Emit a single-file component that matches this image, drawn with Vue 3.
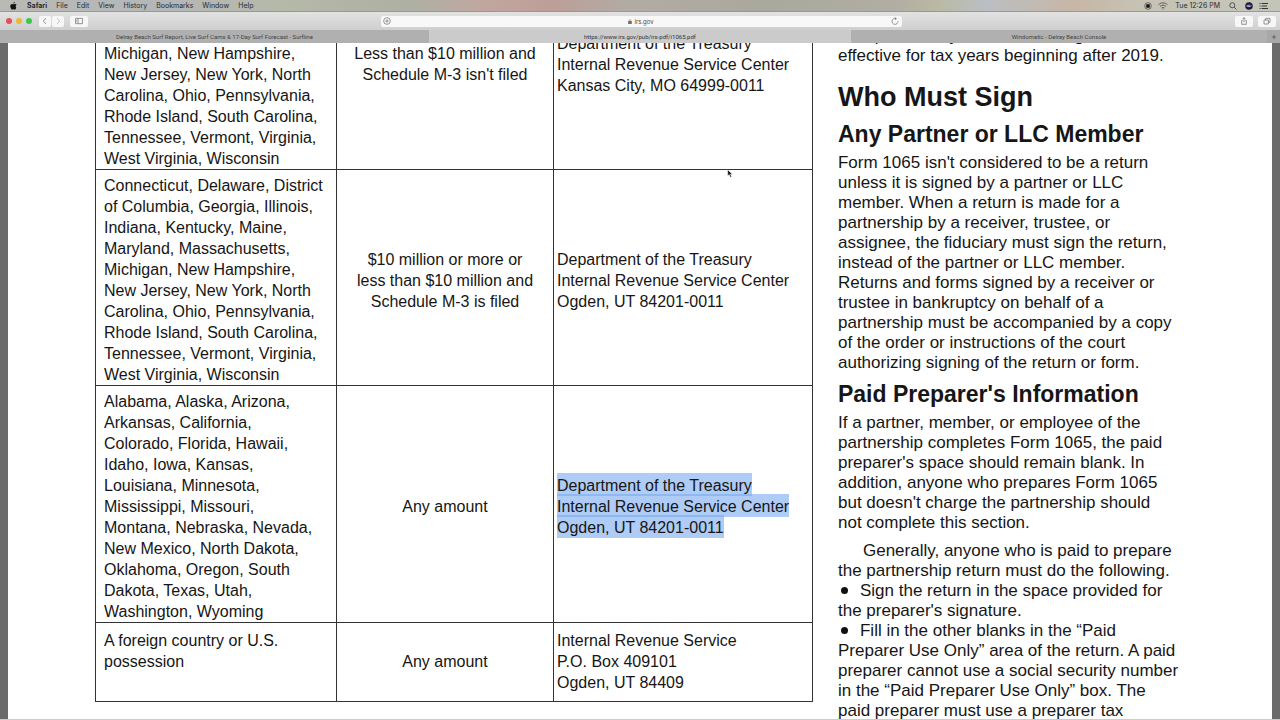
<script setup>
const menus = ['File', 'Edit', 'View', 'History', 'Bookmarks', 'Window', 'Help']

const tabs = [
  { title: 'Delray Beach Surf Report, Live Surf Cams & 17-Day Surf Forecast - Surfline', active: false },
  { title: 'https://www.irs.gov/pub/irs-pdf/i1065.pdf', active: true },
  { title: 'Windomatic - Delray Beach Console', active: false },
]

const rows = [
  {
    kind: 'partial',
    states: `Michigan, New Hampshire,
New Jersey, New York, North
Carolina, Ohio, Pennsylvania,
Rhode Island, South Carolina,
Tennessee, Vermont, Virginia,
West Virginia, Wisconsin`,
    assets: `Less than $10 million and
Schedule M-3 isn't filed`,
    address: ['Department of the Treasury', 'Internal Revenue Service Center', 'Kansas City, MO 64999-0011'],
  },
  {
    kind: 'full',
    states: `Connecticut, Delaware, District
of Columbia, Georgia, Illinois,
Indiana, Kentucky, Maine,
Maryland, Massachusetts,
Michigan, New Hampshire,
New Jersey, New York, North
Carolina, Ohio, Pennsylvania,
Rhode Island, South Carolina,
Tennessee, Vermont, Virginia,
West Virginia, Wisconsin`,
    assets: `$10 million or more or
less than $10 million and
Schedule M-3 is filed`,
    address: ['Department of the Treasury', 'Internal Revenue Service Center', 'Ogden, UT 84201-0011'],
  },
  {
    kind: 'full',
    selected: true,
    states: `Alabama, Alaska, Arizona,
Arkansas, California,
Colorado, Florida, Hawaii,
Idaho, Iowa, Kansas,
Louisiana, Minnesota,
Mississippi, Missouri,
Montana, Nebraska, Nevada,
New Mexico, North Dakota,
Oklahoma, Oregon, South
Dakota, Texas, Utah,
Washington, Wyoming`,
    assets: 'Any amount',
    address: ['Department of the Treasury', 'Internal Revenue Service Center', 'Ogden, UT 84201-0011'],
  },
  {
    kind: 'last',
    states: `A foreign country or U.S.
possession`,
    assets: 'Any amount',
    address: ['Internal Revenue Service', 'P.O. Box 409101', 'Ogden, UT 84409'],
  },
]

const intro = `This preliminary threshold change is
effective for tax years beginning after 2019.`

const signing = `Form 1065 isn't considered to be a return
unless it is signed by a partner or LLC
member. When a return is made for a
partnership by a receiver, trustee, or
assignee, the fiduciary must sign the return,
instead of the partner or LLC member.
Returns and forms signed by a receiver or
trustee in bankruptcy on behalf of a
partnership must be accompanied by a copy
of the order or instructions of the court
authorizing signing of the return or form.`

const preparer = `If a partner, member, or employee of the
partnership completes Form 1065, the paid
preparer's space should remain blank. In
addition, anyone who prepares Form 1065
but doesn't charge the partnership should
not complete this section.`

const generally = `Generally, anyone who is paid to prepare
the partnership return must do the following.`

const duties = [
  `Sign the return in the space provided for
the preparer's signature.`,
  `Fill in the other blanks in the “Paid
Preparer Use Only” area of the return. A paid
preparer cannot use a social security number
in the “Paid Preparer Use Only” box. The
paid preparer must use a preparer tax`,
]
</script>

<template>
  <div class="desktop">
    <header class="menubar">
      <svg class="apple" viewBox="0 0 14 16" aria-hidden="true">
        <path d="M9.9 0c.1 1.700-1.300 3.300-3 3.300C6.700 1.700 8.300.2 9.900 0zM12.700 11.600c-.7 1.600-1.700 3.600-3 3.600-1 0-1.300-.6-2.500-.6s-1.600.6-2.500.6C2.900 15.200.6 11.400.6 8.300c0-2.800 1.800-4.400 3.600-4.400 1.200 0 2.100.7 2.900.7.700 0 1.900-.8 3.300-.8 1.200 0 2.200.6 2.800 1.500-2.500 1.500-2.100 5.300-.5 6.300z" />
      </svg>
      <nav class="menus" aria-label="Menu bar">
        <button type="button" class="menu app">Safari</button>
        <button v-for="m in menus" :key="m" type="button" class="menu">{{ m }}</button>
      </nav>
      <div class="status">
        <svg class="s9" viewBox="0 0 18 18" aria-hidden="true"><circle cx="9" cy="9" r="7.500" fill="none" stroke="#333" stroke-width="1.400" /><rect x="5" y="5" width="8" height="8" rx="1" fill="#111" /></svg>
        <svg class="s10" viewBox="0 0 20 16" fill="none" stroke="#444" stroke-width="1.600" aria-hidden="true"><path d="M1 5.500C6 .5 14 .5 19 5.500M4 8.800c3.500-3.300 8.500-3.300 12 0M7 12c2-1.600 4-1.600 6 0" /><circle cx="10" cy="14" r="1" fill="#333" stroke="none" /></svg>
        <time class="clock">Tue 12:26 PM</time>
        <svg class="s9" viewBox="0 0 16 16" fill="none" stroke="#333" stroke-width="1.500" aria-hidden="true"><circle cx="6.500" cy="6.500" r="5" /><path d="M10.200 10.200 15 15" /></svg>
        <svg class="s9 siri" viewBox="0 0 18 18" aria-hidden="true"><circle cx="9" cy="9" r="8.500" fill="#1b1c33" /><path d="M2 9c4-5 9-4 14-1-4 5-9 5-14 1z" fill="#5267b8" /><path d="M4 9c3-2 6-1 9 1-3 2-7 2-9-1z" fill="#d4a9d6" /></svg>
        <svg class="s10" viewBox="0 0 20 16" stroke="#222" stroke-width="1.800" aria-hidden="true"><path d="M1 3h2M5 3h13M1 8h2M5 8h11M1 13h2M5 13h13" /></svg>
      </div>
    </header>

    <div class="toolbar">
      <div class="left">
        <div class="lights">
          <button type="button" class="light red" aria-label="Close"></button>
          <button type="button" class="light yellow" aria-label="Minimize"></button>
          <button type="button" class="light green" aria-label="Full screen"></button>
        </div>
        <div class="pair">
          <button type="button" class="tool" aria-label="Back"><svg viewBox="0 0 12 12"><path d="M7.500 1.500 3.500 6l4 4.500" /></svg></button>
          <button type="button" class="tool dim" aria-label="Forward"><svg viewBox="0 0 12 12"><path d="M4.500 1.500 8.500 6l-4 4.500" /></svg></button>
        </div>
        <button type="button" class="tool wide" aria-label="Sidebar"><svg viewBox="0 0 12 12"><path d="M.8 2h10.400v8H.8zM4.500 2v8M2 4.500h1.200M2 6.500h1.200" /></svg></button>
      </div>
      <div class="address">
        <button type="button" aria-label="Add to reading list"><svg viewBox="0 0 12 12"><circle cx="6" cy="6" r="5" /><path d="M6 3.500v5M3.500 6h5" /></svg></button>
        <span class="site"><svg class="lock" viewBox="0 0 8 10" aria-hidden="true"><rect x="1" y="4.500" width="6" height="5" /><path d="M2.300 4.500V3a1.700 1.700 0 0 1 3.400 0v1.500" /></svg>irs.gov</span>
        <button type="button" aria-label="Reload"><svg viewBox="0 0 12 12"><path d="M10.500 6.500a4.500 4.500 0 1 1-3-4.200M5.500.5 8 2.300 6 4.500" /></svg></button>
      </div>
      <div class="right">
        <button type="button" class="tool wide" aria-label="Share"><svg viewBox="0 0 12 12"><path d="M4 5H2.500v6h7V5H8M6 8V1M4 3l2-2 2 2" /></svg></button>
        <button type="button" class="tool wide" aria-label="Show all tabs"><svg viewBox="0 0 12 12"><path d="M1.500 4.500h6.500v6H1.500zM4 4.500v-2.500h6.500v6H8" /></svg></button>
      </div>
    </div>

    <div class="tabbar">
      <button v-for="t in tabs" :key="t.title" type="button" class="tab" :class="{ active: t.active }">{{ t.title }}</button>
      <button type="button" class="newtab" aria-label="New tab"><svg viewBox="0 0 8 8"><path d="M4 1v6M1 4h6" /></svg></button>
    </div>

    <main class="viewer">
      <div class="sheet">
        <table class="where">
          <colgroup><col class="c1" /><col class="c2" /><col /></colgroup>
          <tbody>
            <tr v-for="(r, i) in rows" :key="i" :class="r.kind">
              <td class="states">{{ r.states }}</td>
              <td class="assets">{{ r.assets }}</td>
              <td class="office"><div v-for="line in r.address" :key="line"><span :class="{ sel: r.selected }">{{ line }}</span></div></td>
            </tr>
          </tbody>
        </table>
        <article class="text">
          <p>{{ intro }}</p>
          <h1>Who Must Sign</h1>
          <h2>Any Partner or LLC Member</h2>
          <p>{{ signing }}</p>
          <h2 class="second">Paid Preparer's Information</h2>
          <p>{{ preparer }}</p>
          <p class="indent">{{ generally }}</p>
          <ul>
            <li v-for="d in duties" :key="d">{{ d }}</li>
          </ul>
        </article>
      </div>
    </main>

    <svg class="pointer" viewBox="0 0 8 12" aria-hidden="true"><path d="M1 1v8l2-1.800L4.500 11l1.500-.7-1.500-3.300H7z" /></svg>
  </div>
</template>

<style>
html,
body {
  margin: 0;
  overflow: hidden;
}
</style>

<style scoped>
.desktop {
  position: relative;
  display: flex;
  flex-direction: column;
  height: 100vh;
  overflow: hidden;
  background: #6b6b6b;
  color: #161616;
  font-family: "Liberation Sans", Arial, sans-serif;
}
button {
  margin: 0;
  padding: 0;
  border: 0;
  background: none;
  color: inherit;
  font: inherit;
}
svg {
  display: block;
  flex: none;
}

.menubar {
  display: flex;
  align-items: center;
  flex: none;
  height: 12px;
  padding: 0 11px 0 10px;
  background: linear-gradient(90deg, #b9bab5 0%, #b4b7b9 12%, #b5b9a8 22%, #aeb0a3 32%, #c0a69f 38%, #bd9f98 43%, #b1aba4 49%, #aaa99e 60%, #b0aea3 70%, #b9b9a2 73%, #bbbfc3 77%, #c7b6a5 84%, #c6c3b4 89%, #c4c5ba 100%);
  border-bottom: 1px solid #999990;
  box-sizing: border-box;
  color: #2a2a2a;
  font-family: Inter, "Liberation Sans", sans-serif;
  font-size: 7px;
  line-height: 11px;
}
.apple {
  width: 7px;
  height: 8px;
  fill: #111;
}
.menus {
  display: flex;
  gap: 9px;
  margin-left: 10px;
}
.app {
  font-weight: 700;
}
.status {
  display: flex;
  align-items: center;
  margin-left: auto;
}
.s9 {
  width: 8px;
  height: 8px;
}
.s10 {
  width: 10px;
  height: 8px;
  margin-left: 6px;
}
.clock {
  margin: 0 9px 0 7px;
}
.siri {
  margin-left: 8px;
}

.toolbar {
  display: grid;
  grid-template-columns: 1fr 521px 1fr;
  align-items: center;
  flex: none;
  height: 18px;
  padding: 0 4px 0 6px;
  background: linear-gradient(#e2e2e2, #cfcfcf);
}
.left,
.right,
.lights,
.pair {
  display: flex;
  align-items: center;
}
.lights {
  gap: 4px;
}
.light {
  width: 6px;
  height: 6px;
  border-radius: 50%;
}
.red { background: #e4505a; }
.yellow { background: #edb83c; }
.green { background: #3cc84a; }
.pair {
  gap: 1px;
  margin: 0 6px 0 7px;
}
.tool {
  display: flex;
  align-items: center;
  justify-content: center;
  width: 12px;
  height: 11px;
  border-radius: 2px;
  background: #f7f7f7;
}
.wide {
  width: 18px;
}
.toolbar svg {
  width: 8px;
  height: 8px;
  fill: none;
  stroke: #666;
  stroke-width: 1;
}
.toolbar .dim svg {
  stroke: #aaa;
}
.right {
  justify-content: flex-end;
  gap: 5px;
}
.address {
  display: flex;
  align-items: center;
  justify-content: space-between;
  height: 11px;
  padding: 0 2px;
  border-radius: 2px;
  background: #f8f8f8;
}
.site {
  display: flex;
  align-items: center;
  gap: 2px;
  font-family: Inter, "Liberation Sans", sans-serif;
  font-size: 6px;
  line-height: 11px;
  color: #444;
}
.toolbar .lock {
  width: 4px;
  height: 5px;
}
.lock rect {
  fill: #666;
}

.tabbar {
  display: grid;
  grid-template-columns: 429fr 422fr 416fr 13px;
  flex: none;
  height: 13px;
  background: #b0b0b0;
  font-family: Roboto, "Liberation Sans", sans-serif;
  font-size: 6px;
  line-height: 13px;
  color: #444;
}
.tab {
  min-width: 0;
  white-space: nowrap;
}
.tab.active {
  background: #cbcbcb;
  color: #333;
}
.newtab {
  display: flex;
  align-items: center;
  justify-content: center;
  background: #a8a8a8;
}
.newtab svg {
  width: 6px;
  height: 6px;
  stroke: #555;
}

.viewer {
  display: flex;
  flex: 1;
  min-height: 0;
  overflow: hidden;
  padding: 0 8px;
  border-bottom: 1px solid #ccc;
}
.sheet {
  display: flex;
  flex: 1;
  align-items: flex-start;
  gap: 25px;
  margin-top: -18px;
  padding-left: 87px;
  background: #fff;
}
.where {
  flex: none;
  width: 61%;
  border-collapse: collapse;
  table-layout: fixed;
  font-size: 16px;
  line-height: 21px;
}
.c1 { width: 241px; }
.c2 { width: 217px; }
td {
  border: 1px solid #333;
  padding: 5px 0 0 8px;
  vertical-align: top;
  white-space: pre-line;
}
.assets {
  padding-left: 0;
  text-align: center;
  vertical-align: middle;
}
.office {
  padding-left: 3px;
  vertical-align: middle;
  white-space: nowrap;
}
.partial td {
  height: 138px;
}
.partial .states {
  vertical-align: bottom;
}
.partial .assets {
  padding-top: 17px;
  height: 126px;
  vertical-align: top;
}
.partial .office {
  padding-top: 7px;
  height: 136px;
  vertical-align: top;
}
.last td {
  padding-top: 0;
  padding-bottom: 2px;
}
.last .states {
  padding-top: 7px;
  padding-bottom: 29px;
}
.sel {
  background: rgba(120, 170, 240, 0.6);
  padding: 4px 0 2px;
}

.text {
  flex: 1;
  min-width: 0;
  padding-top: 1px;
  font-size: 17px;
  line-height: 20px;
  white-space: pre-line;
}
.text p,
.text ul {
  margin: 0;
  padding: 0;
}
h1 {
  margin: 15px 0 7px;
  font-size: 27px;
  line-height: 32px;
}
h2 {
  margin: 0 0 5px;
  font-size: 23px;
  line-height: 28px;
}
.text .second {
  margin-top: 7px;
}
.text .indent {
  margin-top: 8px;
  text-indent: 25px;
}
.text ul {
  list-style: none;
}
li::before {
  content: "";
  display: inline-block;
  width: 7px;
  height: 7px;
  margin: 0 12px 2px 3px;
  border-radius: 50%;
  background: #111;
}
.pointer {
  position: absolute;
  left: 727px;
  top: 169px;
  width: 6px;
  height: 9px;
  fill: #111;
  stroke: #fff;
  stroke-width: 0.5;
}
</style>
